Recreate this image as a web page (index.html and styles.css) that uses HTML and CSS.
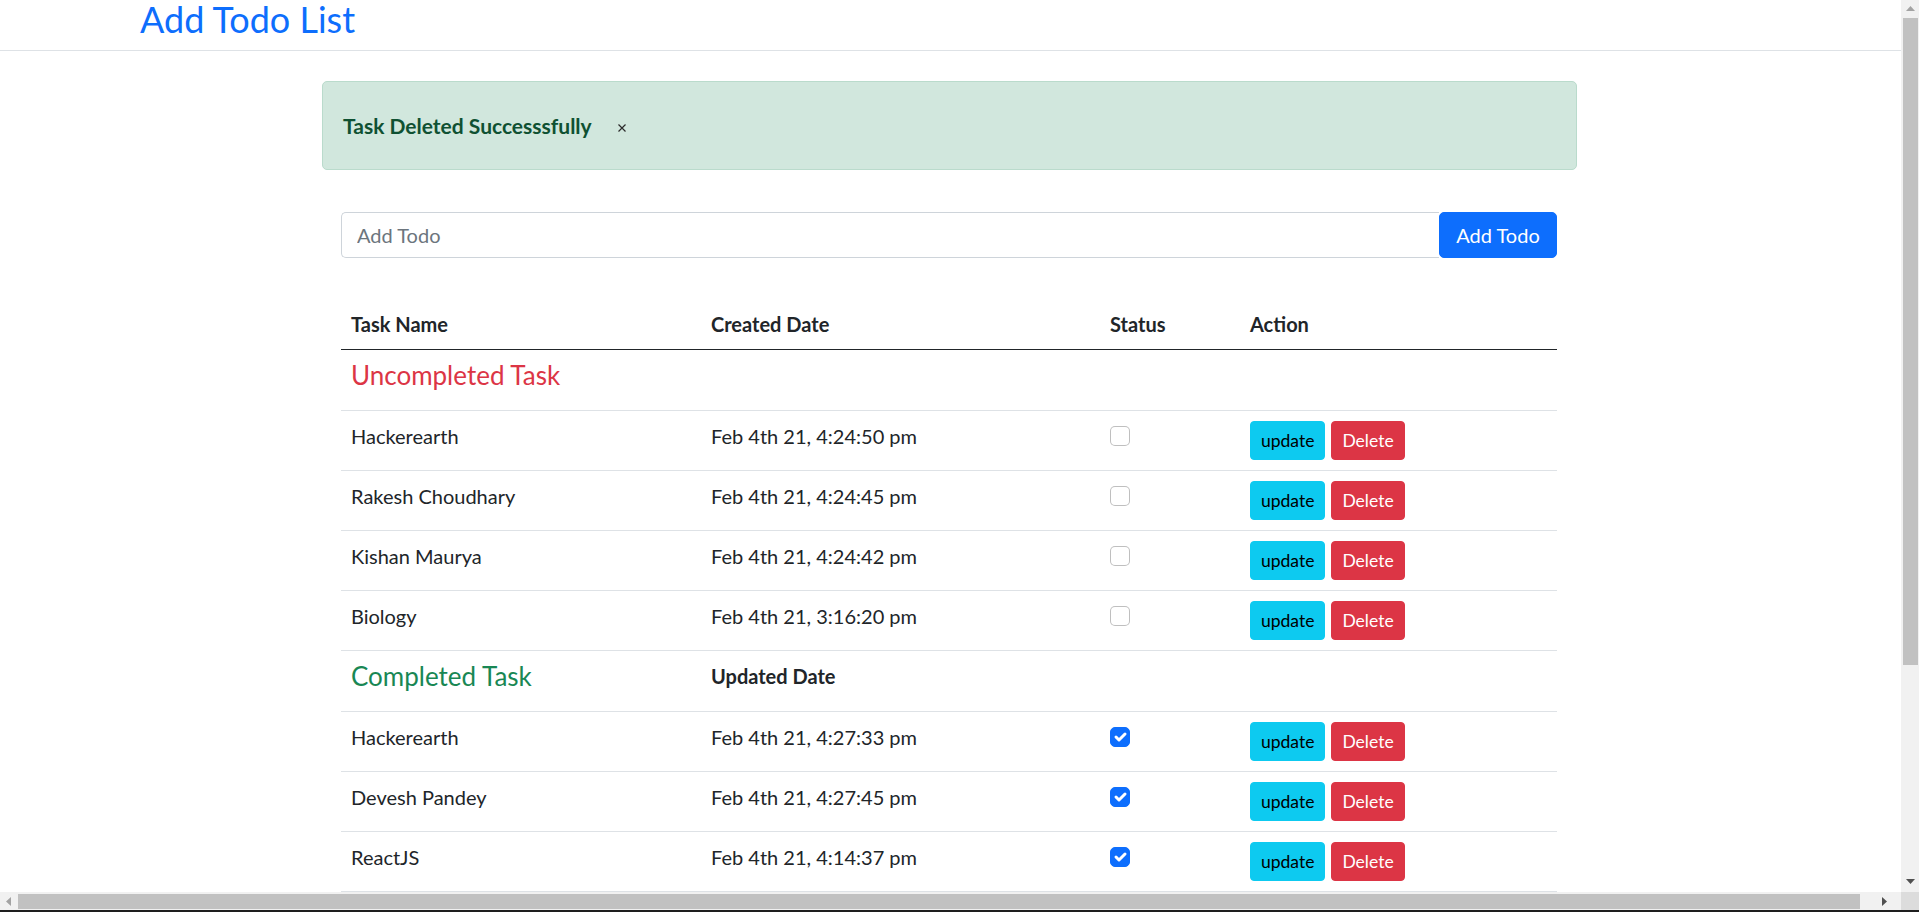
FILE: index.html
```html
<!DOCTYPE html>
<html lang="en">
<head>
<meta charset="utf-8">
<title>Add Todo List</title>
<link rel="stylesheet" href="styles.css">
</head>
<body>
<header class="topbar">
  <h3 class="title">Add Todo List</h3>
</header>
<main class="content">
  <div class="alert">
    <span>Task Deleted Successsfully</span>
    <span class="alert-close"><svg width="10" height="10" viewBox="0 0 10 10"><path d="M1.5 1.5L8.5 8.5M8.5 1.5L1.5 8.5" stroke="#2b2b2b" stroke-width="1.2" fill="none"/></svg></span>
  </div>
  <div class="inner">
    <form class="todo-form">
      <input class="todo-input" type="text" placeholder="Add Todo">
      <button class="btn-add" type="button">Add Todo</button>
    </form>
    <table class="todo-table">
      <colgroup>
        <col class="col-name"><col class="col-date"><col class="col-status"><col class="col-action">
      </colgroup>
      <thead>
        <tr><th>Task Name</th><th>Created Date</th><th>Status</th><th>Action</th></tr>
      </thead>
      <tbody>
        <tr><td><h5 class="section red">Uncompleted Task</h5></td><td></td><td></td><td></td></tr>
        <tr><td>Hackerearth</td><td>Feb 4th 21, 4:24:50 pm</td><td><span class="check"></span></td><td><div class="actions"><button class="btn btn-info">update</button><button class="btn btn-danger">Delete</button></div></td></tr>
        <tr><td>Rakesh Choudhary</td><td>Feb 4th 21, 4:24:45 pm</td><td><span class="check"></span></td><td><div class="actions"><button class="btn btn-info">update</button><button class="btn btn-danger">Delete</button></div></td></tr>
        <tr><td>Kishan Maurya</td><td>Feb 4th 21, 4:24:42 pm</td><td><span class="check"></span></td><td><div class="actions"><button class="btn btn-info">update</button><button class="btn btn-danger">Delete</button></div></td></tr>
        <tr><td>Biology</td><td>Feb 4th 21, 3:16:20 pm</td><td><span class="check"></span></td><td><div class="actions"><button class="btn btn-info">update</button><button class="btn btn-danger">Delete</button></div></td></tr>
        <tr><td><h5 class="section green">Completed Task</h5></td><td class="bold">Updated Date</td><td></td><td></td></tr>
        <tr><td>Hackerearth</td><td>Feb 4th 21, 4:27:33 pm</td><td><span class="check on"><svg width="20" height="20" viewBox="0 0 20 20"><path d="M6 10l3 3l6-6" stroke="#fff" stroke-width="3" fill="none" stroke-linecap="round" stroke-linejoin="round"/></svg></span></td><td><div class="actions"><button class="btn btn-info">update</button><button class="btn btn-danger">Delete</button></div></td></tr>
        <tr><td>Devesh Pandey</td><td>Feb 4th 21, 4:27:45 pm</td><td><span class="check on"><svg width="20" height="20" viewBox="0 0 20 20"><path d="M6 10l3 3l6-6" stroke="#fff" stroke-width="3" fill="none" stroke-linecap="round" stroke-linejoin="round"/></svg></span></td><td><div class="actions"><button class="btn btn-info">update</button><button class="btn btn-danger">Delete</button></div></td></tr>
        <tr><td>ReactJS</td><td>Feb 4th 21, 4:14:37 pm</td><td><span class="check on"><svg width="20" height="20" viewBox="0 0 20 20"><path d="M6 10l3 3l6-6" stroke="#fff" stroke-width="3" fill="none" stroke-linecap="round" stroke-linejoin="round"/></svg></span></td><td><div class="actions"><button class="btn btn-info">update</button><button class="btn btn-danger">Delete</button></div></td></tr>
      </tbody>
    </table>
  </div>
</main>

<div class="vscroll">
  <svg class="arrow arrow-up" width="9" height="5" viewBox="0 0 9 5"><path d="M0 5L4.5 0L9 5Z" fill="#a3a3a3"/></svg>
  <div class="vscroll-thumb"></div>
  <svg class="arrow arrow-down" width="9" height="5" viewBox="0 0 9 5"><path d="M0 0L4.5 5L9 0Z" fill="#505050"/></svg>
</div>
<div class="hscroll">
  <svg class="arrow arrow-left" width="5" height="9" viewBox="0 0 5 9"><path d="M5 0L0 4.5L5 9Z" fill="#a3a3a3"/></svg>
  <div class="hscroll-thumb"></div>
  <svg class="arrow arrow-right" width="5" height="9" viewBox="0 0 5 9"><path d="M0 0L5 4.5L0 9Z" fill="#505050"/></svg>
</div>
<div class="scroll-corner"></div>
<div class="screen-edge"></div>
</body>
</html>
```

FILE: styles.css
```css
html, body {
  margin: 0;
  padding: 0;
  height: 100%;
  overflow: hidden;
  background: #fff;
}
body {
  font-family: Lato, "Segoe UI", "Liberation Sans", sans-serif;
  color: #212529;
  font-size: 20px;
  line-height: 30px;
}

.topbar {
  height: 50px;
  border-bottom: 1px solid #dee2e6;
  padding-left: 140px;
}
.title {
  margin: 0;
  font-size: 36px;
  line-height: 38px;
  font-weight: 400;
  color: #0d6efd;
}

.content {
  width: 1255px;
  margin: 30px 0 0 322px;
}

.alert {
  box-sizing: border-box;
  height: 89px;
  display: flex;
  align-items: center;
  padding: 0 20px;
  background: #d1e7dd;
  border: 1px solid #badbcc;
  border-radius: 5px;
  color: #0f5132;
  font-weight: 700;
  font-size: 21px;
  line-height: 30px;
}
.alert-close {
  display: flex;
  margin-left: 25px;
  margin-top: 4px;
}

.inner {
  padding: 0 20px 0 19px;
}

.todo-form {
  display: flex;
  margin: 42px 0 0;
  height: 46px;
}
.todo-input {
  flex: 1;
  box-sizing: border-box;
  height: 46px;
  margin: 0;
  border: 1px solid #ced4da;
  border-right: 0;
  border-radius: 5px 0 0 5px;
  padding: 0 15px;
  font-family: Lato, "Segoe UI", sans-serif;
  font-size: 20px;
  color: #212529;
  outline: none;
}
.todo-input::placeholder {
  color: #6c757d;
}
.btn-add {
  box-sizing: border-box;
  height: 46px;
  width: 118px;
  margin: 0;
  padding: 0 15px;
  background: #0d6efd;
  border: 1px solid #0d6efd;
  border-radius: 5px;
  color: #fff;
  font-family: Lato, "Segoe UI", sans-serif;
  font-size: 20px;
  line-height: 30px;
}

.todo-table {
  margin-top: 41px;
  width: 100%;
  table-layout: fixed;
  border-collapse: separate;
  border-spacing: 0;
}
.col-name { width: 360px; }
.col-date { width: 399px; }
.col-status { width: 140px; }
.col-action { width: 317px; }

.todo-table th,
.todo-table td {
  padding: 10px;
  text-align: left;
  vertical-align: top;
  font-size: 20px;
  line-height: 30px;
  border-bottom: 1px solid #dee2e6;
  white-space: nowrap;
}
.todo-table th {
  font-weight: 700;
}
.todo-table thead th {
  border-bottom-color: #212529;
}
.todo-table td.bold {
  font-weight: 700;
}

.section {
  margin: 0 0 10px;
  font-size: 26px;
  line-height: 30px;
  font-weight: 400;
}
.section.red { color: #dc3545; }
.section.green { color: #198754; }

.check {
  display: block;
  box-sizing: border-box;
  width: 20px;
  height: 20px;
  margin-top: 5px;
  border: 1px solid rgba(0, 0, 0, 0.25);
  border-radius: 5px;
  background: #fff;
}
.check.on {
  background: #0d6efd;
  border-color: #0d6efd;
}
.check svg {
  display: block;
  margin: -1px;
}

.actions {
  display: flex;
  gap: 6px;
}
.btn {
  box-sizing: border-box;
  height: 39px;
  margin: 0;
  padding: 0 10px;
  border: 1px solid transparent;
  border-radius: 4px;
  font-family: Lato, "Segoe UI", sans-serif;
  font-size: 17.5px;
  line-height: 37px;
}
.btn-info {
  background: #0dcaf0;
  border-color: #0dcaf0;
  color: #000;
}
.btn-danger {
  background: #dc3545;
  border-color: #dc3545;
  color: #fff;
}

/* window scrollbars, drawn over the page */
.vscroll {
  position: fixed;
  left: 1901px;
  top: 0;
  width: 18px;
  height: 892px;
  background: #f1f1f1;
}
.vscroll-thumb {
  position: absolute;
  left: 2px;
  right: 1px;
  top: 18px;
  height: 647px;
  background: #c1c1c1;
}
.arrow {
  position: absolute;
  display: block;
}
.arrow-up { left: 5px; top: 6px; }
.arrow-down { left: 5px; top: 879px; }

.hscroll {
  position: fixed;
  left: 0;
  top: 892px;
  width: 1901px;
  height: 18px;
  background: #f1f1f1;
}
.hscroll-thumb {
  position: absolute;
  left: 18px;
  width: 1842px;
  top: 2px;
  bottom: 1px;
  background: #c1c1c1;
}
.arrow-left { left: 6px; top: 5px; }
.arrow-right { left: 1882px; top: 5px; }

.scroll-corner {
  position: fixed;
  left: 1901px;
  top: 892px;
  width: 18px;
  height: 18px;
  background: #dcdcdc;
}
.screen-edge {
  position: fixed;
  left: 0;
  top: 910px;
  width: 100%;
  height: 2px;
  background: #1e1e1e;
}
```
